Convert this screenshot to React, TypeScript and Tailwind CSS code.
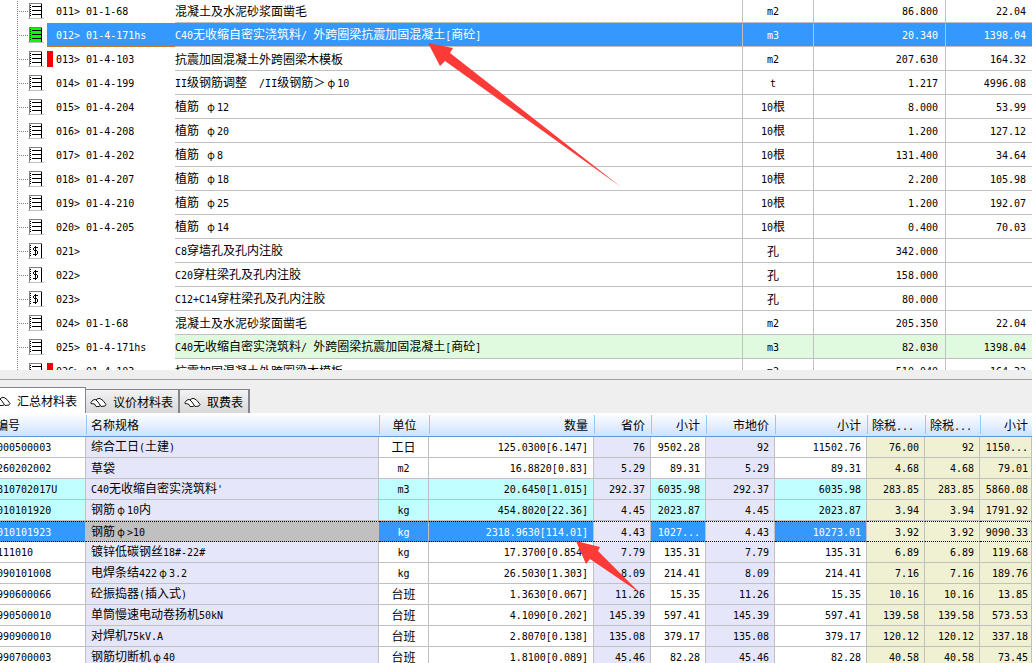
import { useState } from 'react'
import clsx from 'clsx'

type Item = {
  no: string
  code?: string
  name: string
  unit: string
  qty: string
  price?: string
  cost?: boolean
  changed?: boolean
  linked?: boolean
}

const items: Item[] = [
  { no: '011', code: '01-1-68', name: '混凝土及水泥砂浆面凿毛', unit: 'm2', qty: '86.800', price: '22.04' },
  { no: '012', code: '01-4-171hs', name: 'C40无收缩自密实浇筑料/ 外跨圈梁抗震加固混凝土[商砼]', unit: 'm3', qty: '20.340', price: '1398.04' },
  { no: '013', code: '01-4-103', name: '抗震加固混凝土外跨圈梁木模板', unit: 'm2', qty: '207.630', price: '164.32', changed: true },
  { no: '014', code: '01-4-199', name: 'II级钢筋调整  /II级钢筋＞φ10', unit: 't', qty: '1.217', price: '4996.08' },
  { no: '015', code: '01-4-204', name: '植筋 φ12', unit: '10根', qty: '8.000', price: '53.99' },
  { no: '016', code: '01-4-208', name: '植筋 φ20', unit: '10根', qty: '1.200', price: '127.12' },
  { no: '017', code: '01-4-202', name: '植筋 φ8', unit: '10根', qty: '131.400', price: '34.64' },
  { no: '018', code: '01-4-207', name: '植筋 φ18', unit: '10根', qty: '2.200', price: '105.98' },
  { no: '019', code: '01-4-210', name: '植筋 φ25', unit: '10根', qty: '1.200', price: '192.07' },
  { no: '020', code: '01-4-205', name: '植筋 φ14', unit: '10根', qty: '0.400', price: '70.03' },
  { no: '021', name: 'C8穿墙孔及孔内注胶', unit: '孔', qty: '342.000', cost: true },
  { no: '022', name: 'C20穿柱梁孔及孔内注胶', unit: '孔', qty: '158.000', cost: true },
  { no: '023', name: 'C12+C14穿柱梁孔及孔内注胶', unit: '孔', qty: '80.000', cost: true },
  { no: '024', code: '01-1-68', name: '混凝土及水泥砂浆面凿毛', unit: 'm2', qty: '205.350', price: '22.04' },
  { no: '025', code: '01-4-171hs', name: 'C40无收缩自密实浇筑料/ 外跨圈梁抗震加固混凝土[商砼]', unit: 'm3', qty: '82.030', price: '1398.04', linked: true },
  { no: '026', code: '01-4-103', name: '抗震加固混凝土外跨圈梁木模板', unit: 'm2', qty: '510.040', price: '164.32', changed: true },
]

const columns = [
  { title: '编号', width: 'w-[90px]', align: 'text-left' },
  { title: '名称规格', width: '', align: 'text-left' },
  { title: '单位', width: 'w-[50px]', align: 'text-center' },
  { title: '数量', width: 'w-[165px]', align: 'text-right' },
  { title: '省价', width: 'w-[57px]', align: 'text-right' },
  { title: '小计', width: 'w-[55px]', align: 'text-right' },
  { title: '市地价', width: 'w-[69px]', align: 'text-right' },
  { title: '小计', width: 'w-[92px]', align: 'text-right' },
  { title: '除税...', width: 'w-[58px]', align: 'text-right' },
  { title: '除税...', width: 'w-[55px]', align: 'text-right' },
  { title: '小计', width: 'w-[52px]', align: 'text-right' },
]

const materials = [
  ['000500003', '综合工日(土建)', '工日', '125.0300[6.147]', '76', '9502.28', '92', '11502.76', '76.00', '92', '1150...'],
  ['260202002', '草袋', 'm2', '16.8820[0.83]', '5.29', '89.31', '5.29', '89.31', '4.68', '4.68', '79.01'],
  ['810702017U', "C40无收缩自密实浇筑料'", 'm3', '20.6450[1.015]', '292.37', '6035.98', '292.37', '6035.98', '283.85', '283.85', '5860.08'],
  ['010101920', '钢筋φ10内', 'kg', '454.8020[22.36]', '4.45', '2023.87', '4.45', '2023.87', '3.94', '3.94', '1791.92'],
  ['010101923', '钢筋φ>10', 'kg', '2318.9630[114.01]', '4.43', '1027...', '4.43', '10273.01', '3.92', '3.92', '9090.33'],
  ['111010', '镀锌低碳钢丝18#-22#', 'kg', '17.3700[0.854]', '7.79', '135.31', '7.79', '135.31', '6.89', '6.89', '119.68'],
  ['090101008', '电焊条结422φ3.2', 'kg', '26.5030[1.303]', '8.09', '214.41', '8.09', '214.41', '7.16', '7.16', '189.76'],
  ['990600066', '砼振捣器(插入式)', '台班', '1.3630[0.067]', '11.26', '15.35', '11.26', '15.35', '10.16', '10.16', '13.85'],
  ['990500010', '单筒慢速电动卷扬机50kN', '台班', '4.1090[0.202]', '145.39', '597.41', '145.39', '597.41', '139.58', '139.58', '573.53'],
  ['990900010', '对焊机75kV.A', '台班', '2.8070[0.138]', '135.08', '379.17', '135.08', '379.17', '120.12', '120.12', '337.18'],
  ['990700003', '钢筋切断机φ40', '台班', '1.8100[0.089]', '45.46', '82.28', '45.46', '82.28', '40.58', '40.58', '73.45'],
]

const tabs = ['汇总材料表', '议价材料表', '取费表']

export default function App() {
  return (
    <div className="relative flex h-screen flex-col overflow-hidden bg-[#efefef] font-['Noto_Sans_CJK_SC',sans-serif] text-xs leading-4 text-black">
      <ItemGrid />
      <div className="h-2.5 shrink-0 border-b border-[#a0a0a0]" />
      <MaterialPanel />
      <svg className="pointer-events-none absolute left-0 top-0" width="700" height="600" fill="#fc3b38">
        <path d="M428 43 L453 48 L450 53 L621 187 L445 61 L440 66 Z" />
        <path d="M576 541 L600 547 L598 551 L640 593 L590 559 L586 564 Z" />
      </svg>
    </div>
  )
}

// Half-width characters take one cell, Chinese characters and φ take two
function Label({ text }: { text: string }) {
  return (
    <span className="whitespace-pre">
      {text.split(/([\x20-\x7e]+|φ)/).map((part, i) => {
        if (part === 'φ') return <span key={i} className="inline-block w-3 text-center text-[10px]">φ</span>
        if (i % 2 === 1) return <span key={i} className="font-['DejaVu_Sans_Mono',monospace] text-[10px]">{part}</span>
        return part
      })}
    </span>
  )
}

function ItemGrid() {
  const [selected, setSelected] = useState('012')

  return (
    <div className="min-h-0 flex-[370] overflow-hidden bg-white">
      <table className="-mt-px w-full table-fixed border-separate border-spacing-0">
        <colgroup>
          <col className="w-[47px]" />
          <col className="w-32" />
          <col />
          <col className="w-[71px]" />
          <col className="w-[132px]" />
          <col className="w-[86px]" />
        </colgroup>
        <tbody>
          {items.map((item) => {
            const active = item.no === selected
            const cell = clsx(
              'border-b border-b-[#c0c0c0] p-0',
              active && 'border-t border-t-[#c87828] bg-[#3399ff] [border-top-style:dotted]',
              item.linked && !active && 'bg-[#dffadf]',
            )
            return (
              <tr key={item.no} className={clsx('h-6', active && 'text-white')} onClick={() => setSelected(item.no)}>
                <td className="p-0">
                  <TreeIcon cost={item.cost} active={active} />
                </td>
                <td className={clsx('p-0', active && 'border-y border-l border-dotted border-[#c87828] bg-[#3399ff]')}>
                  <div className={clsx('flex items-center', active ? 'gap-0.5' : 'gap-[3px]')}>
                    <span className={clsx('h-4 w-1.5', item.changed && 'bg-[#f00000]')} />
                    <Label text={`${item.no}> ${item.code ?? ''}`} />
                  </div>
                </td>
                <td className={cell + ' border-r border-r-[#c0c0c0]'}><Label text={item.name} /></td>
                <td className={cell + ' border-r border-r-[#c0c0c0] pr-2.5 text-center'}><Label text={item.unit} /></td>
                <td className={cell + ' border-r border-r-[#c0c0c0] pr-[7px] text-right'}><Label text={item.qty} /></td>
                <td className={cell + ' pr-1.5 text-right'}><Label text={item.price ?? ''} /></td>
              </tr>
            )
          })}
        </tbody>
      </table>
    </div>
  )
}

function TreeIcon({ cost, active }: { cost?: boolean; active: boolean }) {
  return (
    <svg className="block" width="47" height="24" shapeRendering="crispEdges" fill="none">
      <path d="M17.5 0V24M19 12.5H28" stroke="#808080" strokeDasharray="1 1" />
      <rect x="29" y="4" width="13" height="15" fill={active ? '#00ff00' : '#fff'} />
      <path d="M29 4.5H42M29.5 4V19" stroke="#808080" />
      <path d="M28 19.5H44" stroke="#c0c0c0" />
      <path d="M41.5 5V19" stroke="#000" />
      <path d="M30.5 6V18" stroke="#000" strokeDasharray="1 1" />
      {cost ? (
        <path d="M35.5 7V17M34 8.5H38M34 11.5H37M33 15.5H37M33.5 9V11M37.5 12V15" stroke="#000" />
      ) : (
        <path d="M32 7.5H41M32 11.5H41M32 15.5H41" stroke="#000" />
      )}
    </svg>
  )
}

function MaterialPanel() {
  const [activeTab, setActiveTab] = useState(0)
  const [selected, setSelected] = useState('010101923')

  return (
    <div className="flex min-h-0 flex-[283] flex-col overflow-hidden">
      <div className="-ml-2.5 flex h-[33px] shrink-0 items-end" role="tablist">
        {tabs.map((tab, i) => (
          <button
            key={tab}
            role="tab"
            aria-selected={i === activeTab}
            onClick={() => setActiveTab(i)}
            className={clsx(
              'flex items-center gap-1.5 border-r border-t border-[#848490] pl-1',
              i === activeTab
                ? 'h-[26px] bg-white pr-2'
                : 'h-6 border-r-2 bg-linear-to-b from-[#f2f2f2] to-[#d8d8d8] pr-[5px]',
            )}
          >
            <PageIcon />
            {tab}
          </button>
        ))}
      </div>
      <div className="min-h-0 flex-1 overflow-hidden bg-white">
        <table className="-ml-1 w-[calc(100%+4px)] table-fixed border-separate border-spacing-0">
          <thead>
            <tr className="h-6 bg-linear-to-b from-white to-[#cce0ff]">
              {columns.map((col, i) => (
                <th
                  key={i}
                  className={clsx(
                    'overflow-hidden border-b border-[#6496d2] p-0 font-normal',
                    col.width,
                    i === 8 || i === 9 ? 'text-left' : col.align,
                  )}
                >
                  <div
                    className={clsx(
                      'h-[19px] leading-5',
                      i > 0 && 'border-l border-[#99c8f8]',
                      (i === 1 || i === 8 || i === 9) && 'pl-1',
                      i > 2 && i < 8 && 'pr-1.5',
                      i === 10 && 'pr-1',
                    )}
                  >
                    <Label text={col.title} />
                  </div>
                </th>
              ))}
            </tr>
          </thead>
          <tbody>
            {materials.map((row, r) => {
              const active = row[0] === selected
              return (
                <tr key={row[0]} className="h-[21px]" onClick={() => setSelected(row[0])}>
                  {row.map((value, i) => {
                    const price = i === 4 || i === 6
                    const net = i > 7
                    const plain = !price && !net && i !== 1
                    return (
                      <td
                        key={i}
                        className={clsx(
                          'border-b border-r border-[#c0c0c0] p-0',
                          columns[i].align,
                          i === 0 && 'pl-px',
                          i === 1 && 'pl-[5px]',
                          i > 2 && i < 10 && 'pr-[5px]',
                          i === 10 && 'pr-[3px]',
                          active && 'border-t border-y-black [border-bottom-style:dotted] [border-top-style:dotted]',
                          active && plain && 'bg-[#3399ff] text-white',
                          active && i === 1 && 'bg-[#c0c0c0]',
                          !active && i === 1 && 'bg-[#e6e6fa]',
                          price && 'bg-[#e6e6fa]',
                          net && 'bg-[#f0f0d2]',
                          !active && plain && (r === 2 || r === 3) && 'bg-[#c0ffff]',
                        )}
                      >
                        <Label text={value} />
                      </td>
                    )
                  })}
                </tr>
              )
            })}
          </tbody>
        </table>
      </div>
    </div>
  )
}

function PageIcon() {
  return (
    <svg width="17" height="12" viewBox="0 0 17 12" fill="#fff" stroke="#000" strokeLinejoin="round">
      <path d="M1 6.5 L3 4 L5 3.5 L8 4.5 L11 9 L9 10.5 H6 L4.5 8 L1 7.5 Z" strokeWidth="0.9" />
      <path d="M6 4 L8 2.5 H10 L13 4.5 L16 8.5 L15 10 L11 10.5 L8 6 Z" strokeWidth="0.9" />
    </svg>
  )
}
